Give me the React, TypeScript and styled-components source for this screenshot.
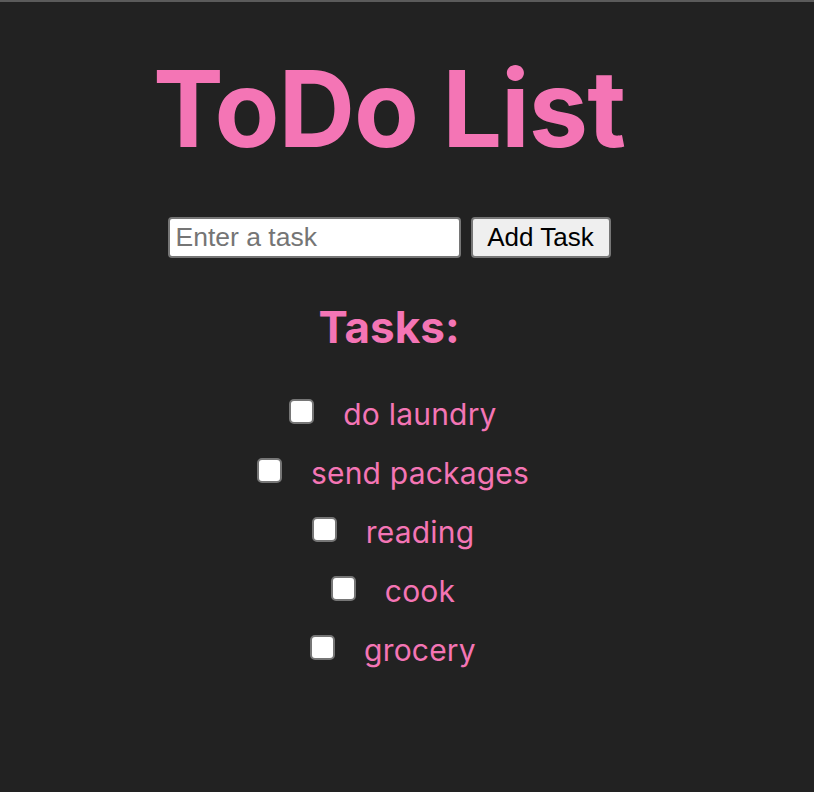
import React, { useState } from "react";
import styled, { createGlobalStyle } from "styled-components";

const GlobalStyle = createGlobalStyle`
  html, body {
    margin: 0;
    padding: 0;
    background: #222222;
  }
  body {
    border-top: 2px solid #5b5b5b;
    min-height: 790px;
    font-family: Inter, "Noto Sans", sans-serif;
  }
`;

const Page = styled.div`
  width: 778px;
  display: flex;
  flex-direction: column;
  align-items: center;
  padding-top: 54px;
`;

const Title = styled.h1`
  margin: 0;
  font-family: Inter, sans-serif;
  font-weight: 700;
  font-size: 106px;
  line-height: 106px;
  letter-spacing: -1px;
  color: #f475b5;
`;

const Form = styled.form`
  display: flex;
  gap: 10px;
  margin-top: 55px;
  height: 41px;
`;

const TaskInput = styled.input`
  box-sizing: border-box;
  width: 293px;
  height: 41px;
  border: 2px solid #767676;
  border-radius: 4px;
  background: #ffffff;
  padding: 0 6px;
  font-family: "Liberation Sans", Arial, sans-serif;
  font-size: 26.5px;
  color: #000;
  outline: none;
  &::placeholder {
    color: #757575;
  }
`;

const AddButton = styled.button`
  box-sizing: border-box;
  width: 140px;
  height: 41px;
  border: 2px solid #767676;
  border-radius: 4px;
  background: #efefef;
  padding: 0;
  font-family: "Liberation Sans", Arial, sans-serif;
  font-size: 26px;
  color: #000;
`;

const Heading = styled.h2`
  margin: 43px 0 0;
  font-family: Inter, sans-serif;
  font-weight: 700;
  font-size: 44px;
  line-height: 53px;
  color: #f475b5;
`;

const List = styled.ul`
  list-style: none;
  margin: 30px 0 0 8px;
  padding: 0;
  display: flex;
  flex-direction: column;
  align-items: center;
`;

const Row = styled.li`
  height: 59px;
  display: flex;
  align-items: center;
  gap: 29px;
`;

const Check = styled.input`
  appearance: none;
  box-sizing: border-box;
  width: 25px;
  height: 25px;
  margin: 0 0 4px;
  border: 2px solid #767676;
  border-radius: 5px;
  background: #ffffff;
  &:checked {
    background: #f475b5;
  }
`;

const Label = styled.span`
  font-family: Inter, sans-serif;
  font-size: 30px;
  letter-spacing: 0.2px;
  color: #f475b5;
`;

export default function App() {
  const [tasks] = useState(["do laundry", "send packages", "reading", "cook", "grocery"]);
  return (
    <>
      <GlobalStyle />
      <Page>
        <Title>ToDo List</Title>
        <Form onSubmit={(e) => e.preventDefault()}>
          <TaskInput placeholder="Enter a task" />
          <AddButton type="submit">Add Task</AddButton>
        </Form>
        <Heading>Tasks:</Heading>
        <List>
          {tasks.map((t) => (
            <Row key={t}>
              <Check type="checkbox" />
              <Label>{t}</Label>
            </Row>
          ))}
        </List>
      </Page>
    </>
  );
}
